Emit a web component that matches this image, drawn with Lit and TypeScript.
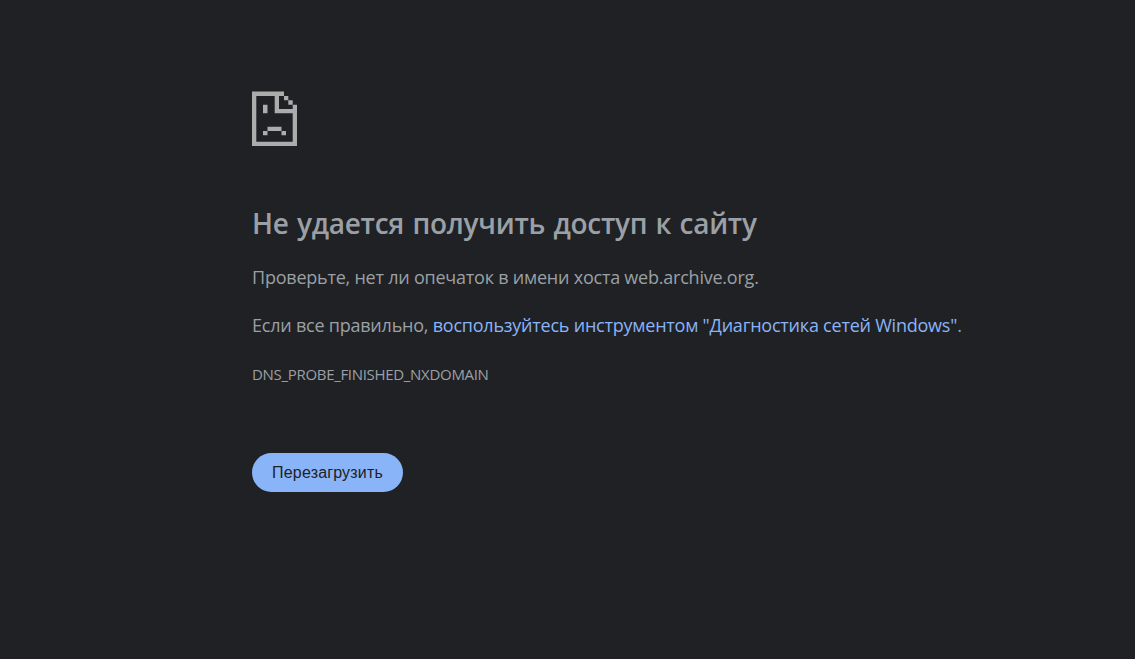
import { LitElement, html, css } from "lit";
import { customElement } from "lit/decorators.js";

@customElement("app-root")
export class AppRoot extends LitElement {
  static styles = css`
    :host {
      display: block;
      box-sizing: border-box;
      height: 659px;
      padding: 91px 0 0 252px;
      background: #202124;
      color: #9aa0a6;
      font-family: "Open Sans", "Noto Sans", sans-serif;
      overflow: hidden;
      white-space: nowrap;
    }
    .icon { display: block; width: 45px; height: 55px; fill: #acacac; }
    h1 {
      margin: 57px 0 0;
      font-size: 28px;
      line-height: 40px;
      font-weight: 600;
      letter-spacing: -0.25px;
      word-spacing: 1.2px;
    }
    p { margin: 0; font-size: 18px; line-height: 28px; letter-spacing: -0.225px; }
    .hint { margin-top: 20px; }
    .advice { margin-top: 20px; }
    a { color: #8ab4f8; text-decoration: none; }
    .code { margin-top: 25px; font-size: 15px; line-height: 20px; letter-spacing: -0.31px; }
    button {
      display: block;
      margin-top: 69px;
      width: 151px;
      height: 39px;
      padding: 0;
      border: 0;
      border-radius: 20px;
      background: #8ab4f8;
      color: #202124;
      font: 16px/39px "Liberation Sans", Arial, sans-serif;
      letter-spacing: 0.17px;
    }
  `;

  render() {
    return html`
      <svg class="icon" viewBox="0 0 45 55" aria-hidden="true">
        <path d="M0 .5H32V5H27V18H40.7V13.7H45V55H0ZM4.3 5V50.7H40.7V22.3H22.7V5Z" fill-rule="evenodd" />
        <path d="M32 5h4.3v4.3H32zM36.3 9.3h4.4v4.4h-4.4zM11 13.7h4.5v8.6H11zM15.5 35.7h14v4.3h-14zM11 40h4.5v4.3H11zM29.5 40H34v4.3h-4.5z" />
      </svg>
      <h1>Не удается получить доступ к сайту</h1>
      <p class="hint">Проверьте, нет ли опечаток в имени хоста web.archive.org.</p>
      <p class="advice">Если все правильно, <a>воспользуйтесь инструментом "Диагностика сетей Windows"</a>.</p>
      <div class="code">DNS_PROBE_FINISHED_NXDOMAIN</div>
      <button>Перезагрузить</button>
    `;
  }
}
